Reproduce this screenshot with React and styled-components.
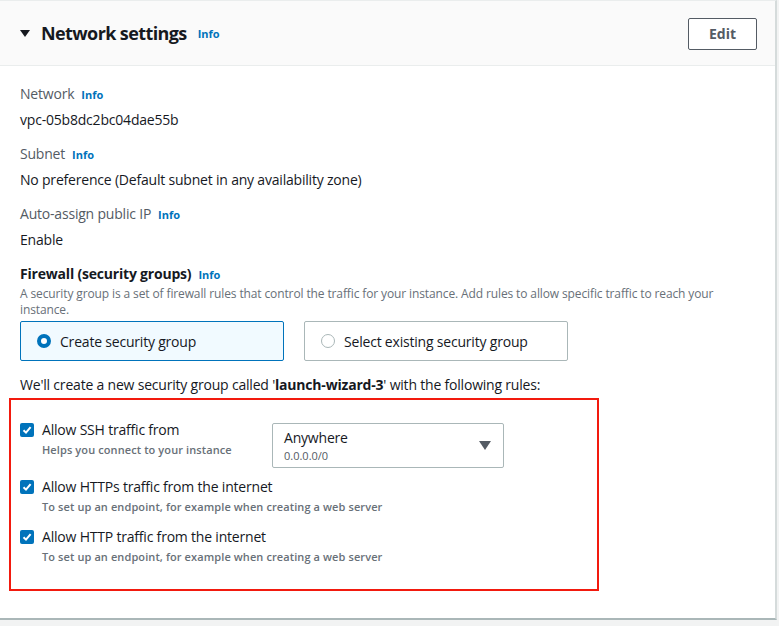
import React from "react";
import styled, { createGlobalStyle } from "styled-components";

const GlobalStyle = createGlobalStyle`
  html, body {
    margin: 0;
    padding: 0;
    background: #f2f3f3;
    font-family: "Open Sans", "Noto Sans", Arial, sans-serif;
    color: #16191f;
  }
`;

const Page = styled.div`
  width: 779px;
  height: 626px;
  background: #f2f3f3;
  overflow: hidden;
`;

const Panel = styled.div`
  width: 777px;
  height: 620px;
  box-sizing: border-box;
  background: #fff;
  border-top: 1px solid #eaeded;
  border-right: 2px solid #d5dbdb;
  border-bottom: 2px solid #aab7b8;
  display: flex;
  flex-direction: column;
`;

const Header = styled.div`
  height: 65px;
  flex: none;
  box-sizing: border-box;
  background: #fafafa;
  border-bottom: 1px solid #eaeded;
  display: flex;
  align-items: center;
  padding: 0 18px 0 20px;
`;

const Caret = styled.span`
  width: 0;
  height: 0;
  border-left: 5px solid transparent;
  border-right: 5px solid transparent;
  border-top: 7px solid #16191f;
  margin-right: 11px;
  margin-top: 1px;
`;

const Title = styled.h2`
  margin: 0;
  font-size: 18px;
  font-weight: 700;
  letter-spacing: -0.6px;
`;

const InfoLink = styled.a`
  font-size: 11px;
  font-weight: 700;
  color: #0073bb;
  text-decoration: none;
  letter-spacing: 0;
  margin-left: ${({ $gap }) => $gap || 7}px;
  cursor: pointer;
`;

const EditButton = styled.button`
  margin-left: auto;
  width: 69px;
  height: 32px;
  background: #fff;
  border: 1px solid #545b64;
  border-radius: 2px;
  font-family: inherit;
  font-size: 14px;
  font-weight: 700;
  color: #545b64;
  margin-top: 1px;
`;

const Body = styled.div`
  padding: 17px 20px 0 20px;
  display: flex;
  flex-direction: column;
  letter-spacing: -0.2px;
`;

const Field = styled.div`
  display: flex;
  flex-direction: column;
  gap: 3px;
  margin-bottom: 12px;
`;

const Label = styled.div`
  font-size: 14px;
  line-height: 22px;
  color: ${({ $strong }) => ($strong ? "#16191f" : "#545b64")};
  font-weight: ${({ $strong }) => ($strong ? 700 : 400)};
  display: flex;
  align-items: baseline;
`;

const Value = styled.div`
  font-size: 14px;
  line-height: 22px;
  color: #16191f;
`;

const Description = styled.div`
  font-size: 12px;
  line-height: 16px;
  letter-spacing: -0.12px;
  color: #687078;
`;

const Tiles = styled.div`
  display: flex;
  gap: 20px;
  margin-top: 3px;
`;

const Tile = styled.div`
  width: 264px;
  height: 40px;
  box-sizing: border-box;
  display: flex;
  align-items: center;
  padding-left: 16px;
  gap: 9px;
  font-size: 14px;
  border-radius: 2px;
  border: 1px solid ${({ $selected }) => ($selected ? "#0073bb" : "#aab7b8")};
  background: ${({ $selected }) => ($selected ? "#f1faff" : "#fff")};
`;

const Radio = styled.span`
  width: 14px;
  height: 14px;
  box-sizing: border-box;
  border-radius: 50%;
  background: #fff;
  border: ${({ $checked }) =>
    $checked ? "4px solid #0073bb" : "1px solid #aab7b8"};
`;

const Notice = styled.div`
  font-size: 14px;
  line-height: 22px;
  margin-top: 13px;
  b {
    font-weight: 700;
  }
`;

const RulesBox = styled.div`
  margin: 2px 0 0 -11px;
  width: 590px;
  height: 193px;
  box-sizing: border-box;
  border: 2px solid #f21a0e;
  padding: 19px 0 0 9px;
  display: flex;
  flex-direction: column;
  gap: 6px;
`;

const Rule = styled.div`
  display: flex;
  align-items: flex-start;
  min-height: ${({ $tall }) => ($tall ? 51 : 44)}px;
`;

const Check = styled.span`
  width: 14px;
  height: 14px;
  flex: none;
  border-radius: 2px;
  background: #0073bb;
  display: flex;
  align-items: center;
  justify-content: center;
  margin-top: 4px;
  margin-right: 8px;
`;

const RuleText = styled.div`
  display: flex;
  flex-direction: column;
  width: 230px;
  flex: ${({ $wide }) => ($wide ? 1 : "none")};
`;

const RuleTitle = styled.div`
  font-size: 14px;
  line-height: 22px;
  color: #16191f;
`;

const RuleHint = styled.div`
  font-size: 11px;
  line-height: 16px;
  font-weight: 600;
  letter-spacing: 0.1px;
  color: #687078;
  margin-top: 1px;
`;

const Select = styled.div`
  width: 232px;
  height: 45px;
  box-sizing: border-box;
  border: 1px solid #aab7b8;
  border-radius: 2px;
  display: flex;
  align-items: center;
  padding: 0 12px 0 11px;
  margin-top: 4px;
`;

const SelectText = styled.div`
  display: flex;
  flex-direction: column;
  flex: 1;
`;

const SelectMain = styled.div`
  font-size: 14px;
  line-height: 18px;
`;

const SelectSub = styled.div`
  font-size: 11px;
  line-height: 15px;
  letter-spacing: 0;
  color: #545b64;
  margin-top: 1px;
`;

const SelectCaret = styled.span`
  width: 0;
  height: 0;
  border-left: 6px solid transparent;
  border-right: 6px solid transparent;
  border-top: 9px solid #545b64;
`;

const CheckMark = () => (
  <svg width="10" height="10" viewBox="0 0 10 10">
    <path d="M1.5 5.2 L4 7.6 L8.6 2.2" fill="none" stroke="#fff" strokeWidth="2" />
  </svg>
);

const rules = [
  { title: "Allow SSH traffic from", hint: "Helps you connect to your instance", select: true },
  { title: "Allow HTTPs traffic from the internet", hint: "To set up an endpoint, for example when creating a web server" },
  { title: "Allow HTTP traffic from the internet", hint: "To set up an endpoint, for example when creating a web server" },
];

const fields = [
  { label: "Network", value: "vpc-05b8dc2bc04dae55b" },
  { label: "Subnet", value: "No preference (Default subnet in any availability zone)" },
  { label: "Auto-assign public IP", value: "Enable" },
];

export default function App() {
  return (
    <Page>
      <GlobalStyle />
      <Panel>
        <Header>
          <Caret />
          <Title>Network settings</Title>
          <InfoLink $gap={11}>Info</InfoLink>
          <EditButton>Edit</EditButton>
        </Header>
        <Body>
          {fields.map((f) => (
            <Field key={f.label}>
              <Label>
                {f.label}
                <InfoLink>Info</InfoLink>
              </Label>
              <Value>{f.value}</Value>
            </Field>
          ))}
          <Label $strong>
            Firewall (security groups)
            <InfoLink>Info</InfoLink>
          </Label>
          <Description>
            A security group is a set of firewall rules that control the traffic for your instance. Add rules to allow specific traffic to reach your instance.
          </Description>
          <Tiles>
            <Tile $selected>
              <Radio $checked />
              Create security group
            </Tile>
            <Tile>
              <Radio />
              Select existing security group
            </Tile>
          </Tiles>
          <Notice>
            We'll create a new security group called '<b>launch-wizard-3</b>' with the following rules:
          </Notice>
          <RulesBox>
            {rules.map((r) => (
              <Rule key={r.title} $tall={r.select}>
                <Check>
                  <CheckMark />
                </Check>
                <RuleText $wide={!r.select}>
                  <RuleTitle>{r.title}</RuleTitle>
                  <RuleHint>{r.hint}</RuleHint>
                </RuleText>
                {r.select && (
                  <Select>
                    <SelectText>
                      <SelectMain>Anywhere</SelectMain>
                      <SelectSub>0.0.0.0/0</SelectSub>
                    </SelectText>
                    <SelectCaret />
                  </Select>
                )}
              </Rule>
            ))}
          </RulesBox>
        </Body>
      </Panel>
    </Page>
  );
}
